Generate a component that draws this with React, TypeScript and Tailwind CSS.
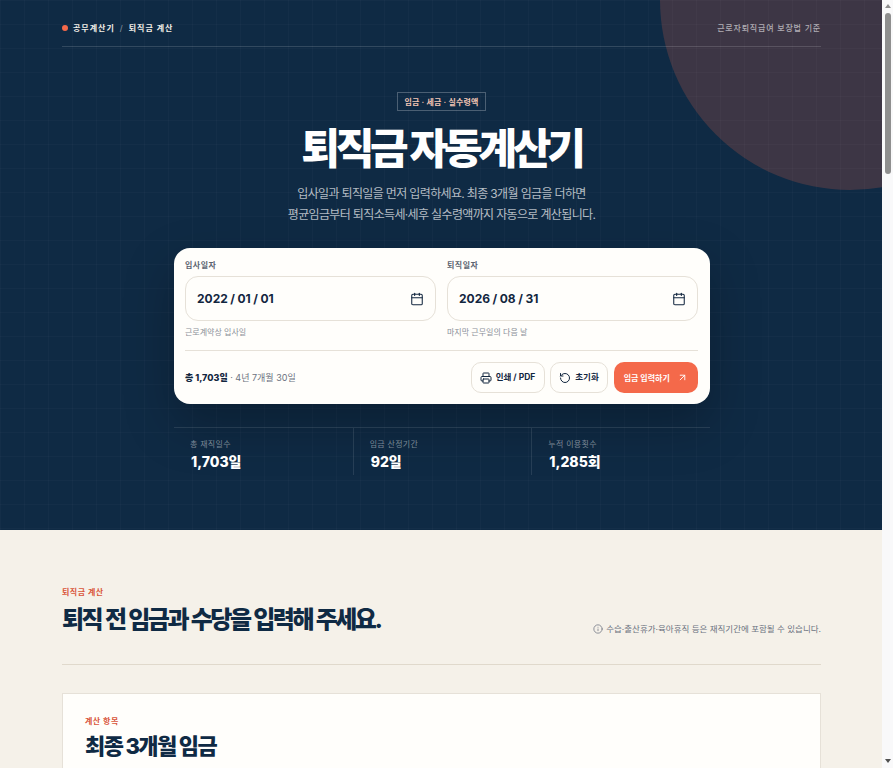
import React from "react";
import { Calendar, Printer, RotateCcw, ArrowUpRight, Info } from "lucide-react";

const font = "font-['Inter','Noto_Sans_CJK_KR',sans-serif]";

const stats = [
  { label: "총 재직일수", value: "1,703일" },
  { label: "임금 산정기간", value: "92일" },
  { label: "누적 이용횟수", value: "1,285회" },
];

const DateField = ({ label, value, hint }: { label: string; value: string; hint: string }) => (
  <div>
    <div className="text-[8px] leading-[12px] font-bold tracking-[0.5px] text-[#5b6470]">{label}</div>
    <div className="mt-[5px] flex h-[45px] items-center justify-between rounded-[13px] border border-[#e6e1d8] bg-[#fffefb] pl-[11px] pr-[11px]">
      <span className="pt-[1px] text-[12px] font-bold [word-spacing:-0.3px] text-[#12263f]">{value}</span>
      <Calendar className="h-[14px] w-[14px] text-[#12263f]" strokeWidth={1.8} />
    </div>
    <div className="mt-[5px] text-[8px] leading-[12px] text-[#8a8f98]">{hint}</div>
  </div>
);

// the reference was taken with a classic scrollbar showing
const Scrollbar = () => (
  <div className="flex h-full w-[11px] shrink-0 flex-col items-center bg-[#f9f9fa] pt-[4px]">
    <div className="h-0 w-0 border-x-[3.5px] border-b-[4px] border-x-transparent border-b-[#8f8f8f]" />
    <div className="mt-[5px] h-[161px] w-[6px] rounded-full bg-[#8f8f8f]" />
    <div className="mt-auto mb-[5px] h-0 w-0 border-x-[3.5px] border-t-[4px] border-x-transparent border-t-[#505050]" />
  </div>
);

export default function App() {
  return (
    <div className={`${font} flex h-[768px] overflow-hidden bg-[#f5f1e9]`}>
      <main className="min-w-0 flex-1">
        <section className="relative h-[530px] overflow-hidden bg-[#0f2a44]">
          <div className="absolute right-[-158px] top-[-190px] h-[380px] w-[380px] rounded-full bg-[#f4694a]/20" />
          <div className="absolute inset-0 bg-[linear-gradient(rgba(255,255,255,0.018)_1px,transparent_1px),linear-gradient(90deg,rgba(255,255,255,0.018)_1px,transparent_1px)] bg-[size:24px_24px]" />

          <div className="relative pl-[62px] pr-[61px]">
            <div className="flex h-[47px] items-center justify-between border-b border-white/15 pt-[9px]">
              <div className="flex items-center text-[8px] font-bold tracking-[1px] text-[#f4f0e9]">
                <span className="mr-[5px] h-[6px] w-[6px] rounded-full bg-[#f4694a]" />
                <span>공무계산기</span>
                <span className="mx-[5px] font-normal text-white/50">/</span>
                <span>퇴직금 계산</span>
              </div>
              <div className="text-[8px] font-medium tracking-[0.8px] text-white/60">근로자퇴직급여 보장법 기준</div>
            </div>

            <div className="flex flex-col items-center">
              <div className="mt-[45px] flex h-[19px] w-[89px] items-center justify-center border border-white/25 text-[8px] font-bold tracking-[0.15px] text-[#f5c7b5]">
                임금 · 세금 · 실수령액
              </div>
              <h1 className="mt-[10px] text-[42px] leading-[56px] font-extrabold tracking-[-4.2px] text-white">퇴직금 자동계산기</h1>
              <p className="mt-[6px] text-center text-[12px] leading-[21px] tracking-[-0.65px] text-white/70">
                입사일과 퇴직일을 먼저 입력하세요. 최종 3개월 임금을 더하면
                <br />
                평균임금부터 퇴직소득세·세후 실수령액까지 자동으로 계산됩니다.
              </p>
            </div>

            <div className="ml-[112px] mt-[23px] h-[156px] w-[536px] rounded-[16px] bg-[#fffefb] pl-[11px] pr-[12px] pt-[11px] shadow-[0_20px_50px_rgba(0,0,0,0.25)]">
              <div className="grid grid-cols-2 gap-[11px]">
                <DateField label="입사일자" value="2022 / 01 / 01" hint="근로계약상 입사일" />
                <DateField label="퇴직일자" value="2026 / 08 / 31" hint="마지막 근무일의 다음 날" />
              </div>
              <div className="mt-[12px] flex h-[43px] items-end justify-between border-t border-[#e6e1d8]">
                <div className="mb-[9px] text-[9px] text-[#6b7280]">
                  <span className="font-extrabold text-[#12263f]">총 1,703일</span> · 4년 7개월 30일
                </div>
                <div className="flex gap-[5.5px] text-[#12263f]">
                  <button className="flex h-[31px] w-[74px] items-center justify-center gap-[4px] rounded-[10px] border border-[#e6e1d8] bg-[#fffefb] text-[8.5px] font-bold">
                    <Printer className="h-[12px] w-[12px]" strokeWidth={2} />
                    인쇄 / PDF
                  </button>
                  <button className="flex h-[31px] w-[58px] items-center justify-center gap-[4px] rounded-[10px] border border-[#e6e1d8] bg-[#fffefb] text-[8.5px] font-bold">
                    <RotateCcw className="h-[12px] w-[12px]" strokeWidth={2} />
                    초기화
                  </button>
                  <button className="flex h-[31px] w-[84.5px] items-center justify-center gap-[7px] rounded-[10px] bg-[#f4694a] text-[8px] font-bold text-white">
                    임금 입력하기
                    <ArrowUpRight className="h-[11px] w-[11px]" strokeWidth={2} />
                  </button>
                </div>
              </div>
            </div>

            <div className="ml-[112px] mt-[23px] grid w-[536px] grid-cols-3 border-t border-white/10">
              {stats.map((s, i) => (
                <div key={s.label} className={`h-[47px] pl-[16px] pt-[10px] ${i > 0 ? "border-l border-white/10" : ""}`}>
                  <div className="text-[8px] leading-[12px] tracking-[0.3px] text-white/45">{s.label}</div>
                  <div className="mt-[2px] pl-[1px] text-[14px] leading-[20px] font-extrabold text-white">{s.value}</div>
                </div>
              ))}
            </div>
          </div>
        </section>

        <section className="pl-[62px] pr-[61px] pt-[56px]">
          <div className="text-[8px] leading-[12px] font-bold tracking-[0.5px] text-[#d9553a]">퇴직금 계산</div>
          <div className="mt-[4px] flex h-[63px] items-start justify-between border-b border-[#e0d9cc]">
            <h2 className="mt-[1px] text-[24px] leading-[34px] font-extrabold tracking-[-2.5px] [word-spacing:1px] text-[#0f2a44]">퇴직 전 임금과 수당을 입력해 주세요.</h2>
            <div className="mt-[20px] flex items-center gap-[3px] text-[8.5px] leading-[14px] text-[#6b7280]">
              <Info className="h-[10px] w-[10px]" strokeWidth={1.8} />
              수습·출산휴가·육아휴직 등은 재직기간에 포함될 수 있습니다.
            </div>
          </div>

          <div className="mt-[28px] h-[200px] border border-[#e6e1d8] bg-[#fffefb] px-[22px] pt-[21px]">
            <div className="text-[8px] leading-[12px] font-bold tracking-[0.5px] text-[#d9553a]">계산 항목</div>
            <h3 className="mt-[3px] text-[22px] leading-[32px] font-extrabold tracking-[-1.6px] text-[#0f2a44]">최종 3개월 임금</h3>
          </div>
        </section>
      </main>
      <Scrollbar />
    </div>
  );
}
